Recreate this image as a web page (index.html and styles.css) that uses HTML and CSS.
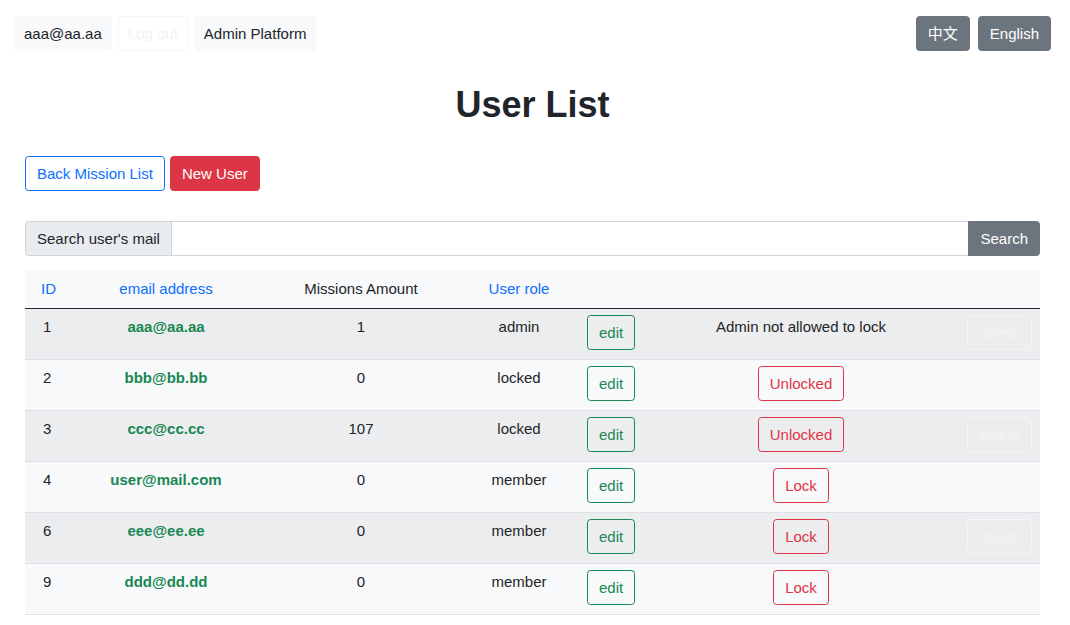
FILE: index.html
```html
<!DOCTYPE html>
<html lang="en">
<head>
<meta charset="utf-8">
<title>User List</title>
<link rel="stylesheet" href="styles.css">
</head>
<body>
<nav class="topbar">
  <div class="nav-left">
    <button class="btn btn-light">aaa@aa.aa</button>
    <button class="btn btn-outline-light">Log out</button>
    <button class="btn btn-light">Admin Platform</button>
  </div>
  <div class="nav-right">
    <button class="btn btn-secondary">中文</button>
    <button class="btn btn-secondary">English</button>
  </div>
</nav>
<main class="page">
  <h1 class="title">User List</h1>
  <div class="actions">
    <button class="btn btn-outline-primary">Back Mission List</button>
    <button class="btn btn-danger">New User</button>
  </div>
  <div class="search">
    <span class="search-label">Search user's mail</span>
    <input class="search-input" type="text">
    <button class="btn btn-secondary search-btn">Search</button>
  </div>
  <table class="users">
    <colgroup>
      <col class="c-id"><col class="c-mail"><col class="c-amt"><col class="c-role"><col class="c-edit"><col class="c-lock"><col class="c-del">
    </colgroup>
    <thead>
      <tr>
        <th class="left link">ID</th>
        <th class="link">email address</th>
        <th>Missions Amount</th>
        <th class="link">User role</th>
        <th></th><th></th><th></th>
      </tr>
    </thead>
    <tbody>
      <tr>
        <td class="left">1</td><td class="mail">aaa@aa.aa</td><td>1</td><td>admin</td>
        <td class="left"><button class="btn btn-outline-success">edit</button></td>
        <td>Admin not allowed to lock</td>
        <td class="left"><button class="btn btn-outline-light">delete</button></td>
      </tr>
      <tr>
        <td class="left">2</td><td class="mail">bbb@bb.bb</td><td>0</td><td>locked</td>
        <td class="left"><button class="btn btn-outline-success">edit</button></td>
        <td><button class="btn btn-outline-danger">Unlocked</button></td>
        <td></td>
      </tr>
      <tr>
        <td class="left">3</td><td class="mail">ccc@cc.cc</td><td>107</td><td>locked</td>
        <td class="left"><button class="btn btn-outline-success">edit</button></td>
        <td><button class="btn btn-outline-danger">Unlocked</button></td>
        <td class="left"><button class="btn btn-outline-light">delete</button></td>
      </tr>
      <tr>
        <td class="left">4</td><td class="mail">user@mail.com</td><td>0</td><td>member</td>
        <td class="left"><button class="btn btn-outline-success">edit</button></td>
        <td><button class="btn btn-outline-danger">Lock</button></td>
        <td></td>
      </tr>
      <tr>
        <td class="left">6</td><td class="mail">eee@ee.ee</td><td>0</td><td>member</td>
        <td class="left"><button class="btn btn-outline-success">edit</button></td>
        <td><button class="btn btn-outline-danger">Lock</button></td>
        <td class="left"><button class="btn btn-outline-light">delete</button></td>
      </tr>
      <tr>
        <td class="left">9</td><td class="mail">ddd@dd.dd</td><td>0</td><td>member</td>
        <td class="left"><button class="btn btn-outline-success">edit</button></td>
        <td><button class="btn btn-outline-danger">Lock</button></td>
        <td></td>
      </tr>
    </tbody>
  </table>
</main>
</body>
</html>
```
FILE: styles.css
```css
* { box-sizing: border-box; }
html, body { margin: 0; padding: 0; background: #fff; }
body {
  font-family: "Liberation Sans", Arial, "Noto Sans CJK SC", sans-serif;
  font-size: 15px;
  line-height: 1.5;
  color: #212529;
}
.btn {
  display: inline-block;
  font-family: inherit;
  font-size: 15px;
  line-height: 23px;
  height: 35px;
  padding: 5px 11px;
  border: 1px solid transparent;
  border-radius: 3.6px;
  background: transparent;
  cursor: pointer;
  color: #212529;
  margin: 0;
}
.btn-light { background: #f8f9fa; border-color: #f8f9fa; color: #212529; }
.btn-outline-light { background: transparent; border-color: #f4f5f6; color: #f2f3f4; }
.btn-secondary { background: #6c757d; border-color: #6c757d; color: #fff; }
.btn-outline-primary { border-color: #0d6efd; color: #0d6efd; }
.btn-danger { background: #dc3545; border-color: #dc3545; color: #fff; }
.btn-outline-success { border-color: #198754; color: #198754; }
.btn-outline-danger { border-color: #dc3545; color: #dc3545; }

.topbar {
  display: flex;
  justify-content: space-between;
  padding: 16px 19px 0 14px;
}
.nav-left { display: flex; gap: 6px; }
.nav-left .btn { padding: 5px 9px; }
.nav-right { display: flex; gap: 8px; }

.page { padding: 0 30px 0 25px; }
.title {
  margin: 31px 0 0;
  text-align: center;
  font-size: 36px;
  line-height: 43px;
  font-weight: 700;
  color: #212529;
  position: relative;
  top: 1px;
}
.actions { display: flex; gap: 5px; margin-top: 31px; }

.search { display: flex; margin-top: 30px; height: 35px; }
.search-label {
  background: #e9ecef;
  border: 1px solid #ced4da;
  border-radius: 3.6px 0 0 3.6px;
  padding: 5px 11px;
  line-height: 23px;
  white-space: nowrap;
}
.search-input {
  flex: 1;
  border: 1px solid #ced4da;
  border-left: none;
  border-right: none;
  font: inherit;
  padding: 5px 11px;
  outline: none;
}
.search-btn { border-radius: 0 3.6px 3.6px 0; }

.users {
  width: 100%;
  margin-top: 14px;
  border-collapse: collapse;
  table-layout: fixed;
  background: #f8f9fa;
}
.c-id { width: 44px; }
.c-mail { width: 194px; }
.c-amt { width: 196px; }
.c-role { width: 120px; }
.c-edit { width: 63px; }
.c-lock { width: 318px; }
.c-del { width: 80px; }
.users th {
  font-weight: 400;
  text-align: center;
  padding: 7px 8px;
  line-height: 23px;
  height: 38px;
  border-bottom: 1px solid #212529;
  white-space: nowrap;
}
.users th.left { text-align: left; padding-left: 16px; }
.users th.link { color: #0d6efd; }
.users td {
  text-align: center;
  vertical-align: top;
  padding: 6px 8px 8px;
  height: 51px;
  line-height: 23px;
  border-bottom: 1px solid #dee2e6;
  white-space: nowrap;
}
.users td:first-child { padding-left: 18px; }
.users td.left { text-align: left; }
.users td:last-child { padding-left: 7px; }
.users tbody tr:nth-child(odd) { background: #ecedee; }
.users tbody tr:nth-child(even) { background: #f8f9fa; }
.users td.mail { color: #198754; font-weight: 700; }
```
